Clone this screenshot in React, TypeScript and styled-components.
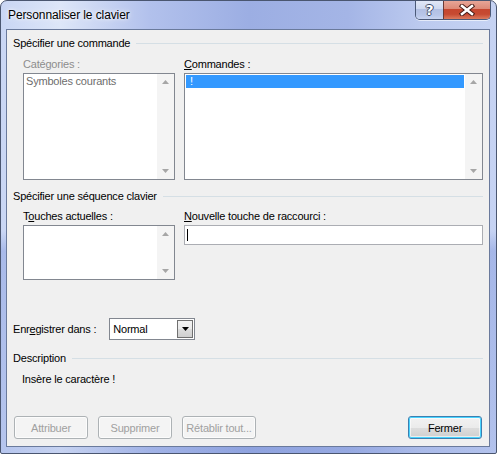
import React from "react";
import styled, { createGlobalStyle } from "styled-components";

const Global = createGlobalStyle`
  html, body { margin: 0; padding: 0; width: 497px; height: 454px; overflow: hidden; background: #ffffff; }
  * { box-sizing: border-box; }
  #root { width: 497px; height: 454px; }
`;

const UI_FONT = `"Liberation Sans", Arial, sans-serif`;

const Window = styled.div`
  width: 497px;
  height: 454px;
  border: 1px solid #4a5670;
  border-radius: 7px 7px 2px 2px;
  background:
    linear-gradient(180deg, rgba(255,255,255,0) 0px, rgba(255,255,255,0) 230px, rgba(70,100,200,0.25) 250px, rgba(70,100,200,0.15) 454px),
    linear-gradient(90deg, #c9d6f4 0%, #dde6f8 12%, #b2c1ec 30%, #9caee3 50%, #a4b5e6 70%, #bccaef 85%, #c6d3f3 100%);
  display: flex;
  flex-direction: column;
  font-family: ${UI_FONT};
  overflow: hidden;
`;

const TitleBar = styled.div`
  height: 28px;
  flex: none;
  display: flex;
  align-items: flex-start;
  justify-content: space-between;
  padding: 0 5px 0 7px;
`;

const Title = styled.div`
  font-family: ${UI_FONT};
  font-size: 12px;
  color: #000;
  line-height: 15px;
  margin-top: 7px;
  letter-spacing: -0.1px;
  text-shadow: 0 0 6px rgba(255,255,255,0.9), 0 0 3px rgba(255,255,255,0.9);
`;

const CaptionGroup = styled.div`
  display: flex;
  margin-top: -1px;
  height: 20px;
  border: 1px solid #4b5a78;
  border-top: none;
  border-radius: 0 0 5px 5px;
  overflow: hidden;
  box-shadow: 0 1px 0 rgba(255,255,255,0.6);
`;

const CaptionButton = styled.div<{ $variant: "help" | "close" }>`
  width: ${(p) => (p.$variant === "close" ? "47px" : "27px")};
  height: 19px;
  display: flex;
  align-items: center;
  justify-content: center;
  border-left: ${(p) => (p.$variant === "close" ? "1px solid #6b3a36" : "none")};
  background: ${(p) =>
    p.$variant === "close"
      ? "linear-gradient(180deg, #e9a99b 0%, #dd8a78 45%, #c6462f 50%, #c64a32 75%, #dc7b5f 100%)"
      : "linear-gradient(180deg, #e3e9f7 0%, #cfd9f0 45%, #b2c0e3 50%, #b8c6e8 80%, #c9d5f1 100%)"};
`;

const HelpGlyph = styled.span`
  font-family: "DejaVu Sans", sans-serif;
  font-weight: bold;
  font-size: 14px;
  line-height: 14px;
  color: #fff;
  text-shadow: 1px 0 0 #3d4a66, -1px 0 0 #3d4a66, 0 1px 0 #3d4a66, 0 -1px 0 #3d4a66;
`;

const Client = styled.div`
  flex: 1;
  margin: 0 6px 6px 5px;
  border: 1px solid #6a7a9c;
  background: #f0f0f0;
  display: flex;
  flex-direction: column;
  padding: 7px 6px 7px 6px;
  font-size: 11px;
  letter-spacing: -0.2px;
  color: #000;
`;

const GroupHeader = styled.div<{ $mt?: number }>`
  display: flex;
  align-items: center;
  height: 13px;
  line-height: 13px;
  margin-top: ${(p) => p.$mt ?? 0}px;
  white-space: nowrap;
  &::after {
    content: "";
    flex: 1;
    height: 1px;
    background: #d5dfe5;
    margin-left: 6px;
  }
`;

const TwoCols = styled.div<{ $mt: number }>`
  display: grid;
  grid-template-columns: 152px 299px;
  column-gap: 9px;
  margin-top: ${(p) => p.$mt}px;
  padding-left: 10px;
`;

const Field = styled.div`
  display: flex;
  flex-direction: column;
  gap: 2px;
`;

const Label = styled.div<{ $disabled?: boolean }>`
  height: 13px;
  line-height: 13px;
  color: ${(p) => (p.$disabled ? "#8d8d8d" : "#000")};
  white-space: nowrap;
`;

const U = styled.span`
  text-decoration: underline;
  text-underline-offset: 1px;
`;

const ListBox = styled.div<{ $h: number }>`
  height: ${(p) => p.$h}px;
  border: 1px solid #828790;
  background: #fff;
  display: flex;
`;

const ListItems = styled.div`
  flex: 1;
  padding: 1px;
  display: flex;
  flex-direction: column;
`;

const ListItem = styled.div<{ $selected?: boolean; $disabled?: boolean }>`
  height: 13px;
  line-height: 13px;
  padding-left: ${(p) => (p.$selected ? "4px" : "1px")};
  background: ${(p) => (p.$selected ? "#3399ff" : "transparent")};
  color: ${(p) => (p.$selected ? "#fff" : p.$disabled ? "#6d6d6d" : "#000")};
  white-space: nowrap;
`;

const ScrollTrack = styled.div`
  width: 17px;
  background: #f4f4f4;
  display: flex;
  flex-direction: column;
  justify-content: space-between;
  align-items: center;
  padding: 6px 0 6px 0;
`;

const Arrow = ({ down }: { down?: boolean }) => (
  <svg width="7" height="4" viewBox="0 0 7 4">
    <polygon points={down ? "0,0 7,0 3.5,4" : "0,4 7,4 3.5,0"} fill="#a6a6a6" />
  </svg>
);

const TextInput = styled.div`
  height: 20px;
  border: 1px solid #abadb3;
  background: #fff;
  display: flex;
  align-items: center;
  padding-left: 2px;
`;

const Caret = styled.div`
  width: 1px;
  height: 12px;
  background: #000;
`;

const SaveRow = styled.div`
  display: flex;
  align-items: center;
  margin-top: 38px;
  gap: 13px;
`;

const Select = styled.div`
  width: 86px;
  height: 22px;
  border: 1px solid #828790;
  background: #fff;
  display: flex;
  align-items: center;
  padding: 1px;
`;

const SelectValue = styled.div`
  flex: 1;
  padding-left: 2px;
  line-height: 13px;
`;

const DropButton = styled.div`
  width: 16px;
  height: 18px;
  border: 1px solid #707070;
  background: linear-gradient(180deg, #f2f2f2 0%, #ebebeb 50%, #dddddd 51%, #cfcfcf 100%);
  display: flex;
  align-items: center;
  justify-content: center;
`;

const Description = styled.div`
  margin-top: 8px;
  padding-left: 9px;
  height: 13px;
  line-height: 13px;
`;

const Spacer = styled.div`
  flex: 1;
`;

const ButtonRow = styled.div`
  display: flex;
  align-items: center;
  padding: 0 1px 0 1px;
  gap: 10px;
`;

const PushButton = styled.div<{ $disabled?: boolean; $default?: boolean }>`
  width: 74px;
  height: 23px;
  border-radius: 3px;
  display: flex;
  align-items: center;
  justify-content: center;
  white-space: nowrap;
  border: 1px solid ${(p) => (p.$disabled ? "#adb2b5" : "#3c7fb1")};
  color: ${(p) => (p.$disabled ? "#a0a0a0" : "#000")};
  background: ${(p) =>
    p.$disabled
      ? "#f4f4f4"
      : "linear-gradient(180deg, #eaf6fd 0%, #d9f0fc 50%, #bee6fd 51%, #a7d9f5 100%)"};
  box-shadow: ${(p) =>
    p.$default ? "inset 0 0 0 1px #48d4ff, inset 0 0 0 2px rgba(255,255,255,0.6)" : "inset 0 0 0 1px #fcfcfc"};
`;

const FocusedButton = styled(PushButton)`
  margin-left: auto;
  background: linear-gradient(180deg, #f2f2f2 0%, #ebebeb 50%, #dddddd 51%, #cfcfcf 100%);
`;

export default function App() {
  return (
    <>
      <Global />
      <Window>
        <TitleBar>
          <Title>Personnaliser le clavier</Title>
          <CaptionGroup>
            <CaptionButton $variant="help">
              <HelpGlyph>?</HelpGlyph>
            </CaptionButton>
            <CaptionButton $variant="close">
              <svg width="16" height="12" viewBox="0 0 16 12">
                <path d="M3 2 L13 10 M13 2 L3 10" stroke="#4a1e18" strokeWidth="4.5" strokeLinecap="square" />
                <path d="M3 2 L13 10 M13 2 L3 10" stroke="#ffffff" strokeWidth="2.5" strokeLinecap="square" />
              </svg>
            </CaptionButton>
          </CaptionGroup>
        </TitleBar>
        <Client>
          <GroupHeader>Spécifier une commande</GroupHeader>
          <TwoCols $mt={8}>
            <Field>
              <Label $disabled>Catégories :</Label>
              <ListBox $h={107}>
                <ListItems>
                  <ListItem $disabled>Symboles courants</ListItem>
                </ListItems>
                <ScrollTrack>
                  <Arrow />
                  <Arrow down />
                </ScrollTrack>
              </ListBox>
            </Field>
            <Field>
              <Label>
                <U>C</U>ommandes :
              </Label>
              <ListBox $h={107}>
                <ListItems>
                  <ListItem $selected>!</ListItem>
                </ListItems>
                <ScrollTrack>
                  <Arrow />
                  <Arrow down />
                </ScrollTrack>
              </ListBox>
            </Field>
          </TwoCols>
          <GroupHeader $mt={10}>Spécifier une séquence clavier</GroupHeader>
          <TwoCols $mt={7}>
            <Field>
              <Label>
                T<U>o</U>uches actuelles :
              </Label>
              <ListBox $h={55}>
                <ListItems />
                <ScrollTrack>
                  <Arrow />
                  <Arrow down />
                </ScrollTrack>
              </ListBox>
            </Field>
            <Field>
              <Label>
                <U>N</U>ouvelle touche de raccourci :
              </Label>
              <TextInput>
                <Caret />
              </TextInput>
            </Field>
          </TwoCols>
          <SaveRow>
            <Label>
              Enr<U>e</U>gistrer dans :
            </Label>
            <Select>
              <SelectValue>Normal</SelectValue>
              <DropButton>
                <svg width="7" height="4" viewBox="0 0 7 4">
                  <polygon points="0,0 7,0 3.5,4" fill="#000" />
                </svg>
              </DropButton>
            </Select>
          </SaveRow>
          <GroupHeader $mt={12}>Description</GroupHeader>
          <Description>Insère le caractère !</Description>
          <Spacer />
          <ButtonRow>
            <PushButton $disabled>Attribuer</PushButton>
            <PushButton $disabled>Supprimer</PushButton>
            <PushButton $disabled>Rétablir tout...</PushButton>
            <FocusedButton $default>Fermer</FocusedButton>
          </ButtonRow>
        </Client>
      </Window>
    </>
  );
}
